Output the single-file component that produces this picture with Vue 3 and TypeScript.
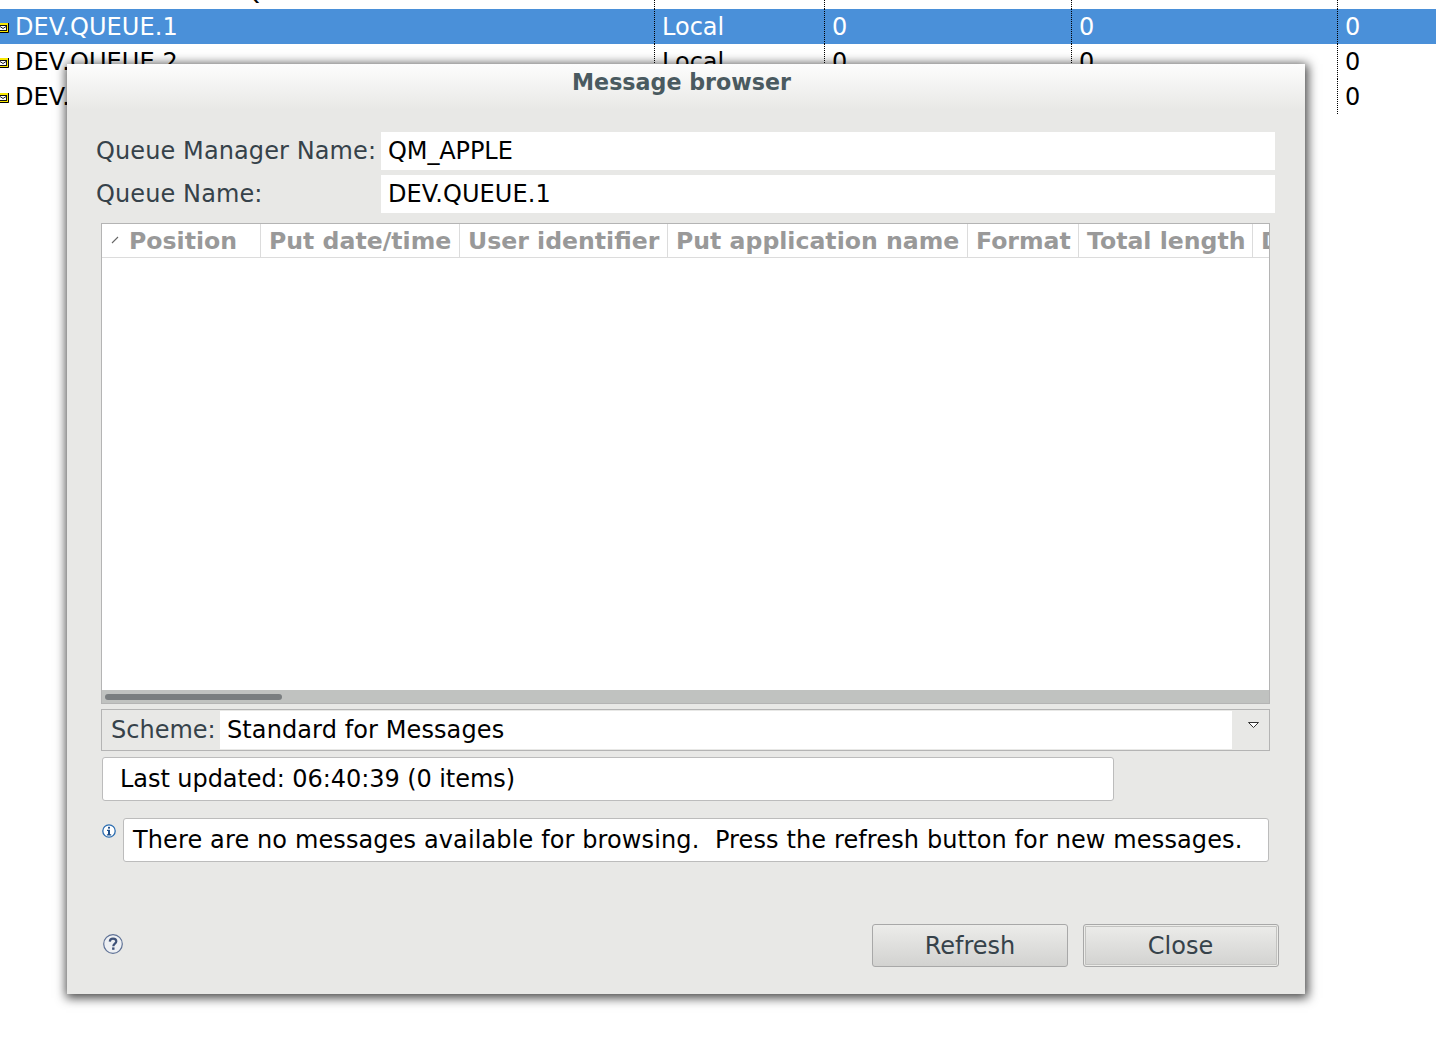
<script setup lang="ts">
const rows = [
  { name: 'DEV.DEAD.LETTER.QUEUE', selected: false },
  { name: 'DEV.QUEUE.1', selected: true },
  { name: 'DEV.QUEUE.2', selected: false },
  { name: 'DEV.QUEUE.3', selected: false },
]
const columns = [
  { label: 'Position', width: 159 },
  { label: 'Put date/time', width: 199 },
  { label: 'User identifier', width: 208 },
  { label: 'Put application name', width: 300 },
  { label: 'Format', width: 111 },
  { label: 'Total length', width: 174 },
  { label: 'Data length', width: 120 },
]
</script>

<template>
  <div class="page">
    <div class="queue-table">
      <div v-for="r in rows" :key="r.name" class="qrow" :class="{ selected: r.selected }">
        <div class="qcell qname">
          <svg class="mail" width="9" height="10" viewBox="0 0 9 10">
            <rect x="0" y="0" width="9" height="10" fill="#f7e600" />
            <path d="M8.5 0V9.5H0" fill="none" stroke="#000" stroke-width="1" />
            <rect x="-0.5" y="2.5" width="7" height="5" fill="#fff" stroke="#111" stroke-width="1" />
            <path d="M0 3.5l3 2 3-2" fill="none" stroke="#222" stroke-width="1" />
          </svg>
          <span class="qname-text">{{ r.name }}</span>
        </div>
        <div class="qcell qtype">Local</div>
        <div class="qcell qn1">0</div>
        <div class="qcell qn2">0</div>
        <div class="qcell qn3">0</div>
      </div>
    </div>

    <div class="dialog">
      <div class="title">Message browser</div>
      <div class="form">
        <div class="form-row">
          <label>Queue Manager Name:</label>
          <div class="value tight">QM_APPLE</div>
        </div>
        <div class="form-row">
          <label>Queue Name:</label>
          <div class="value wide">DEV.QUEUE.1</div>
        </div>
      </div>

      <div class="msg-table">
        <div class="msg-head">
          <div v-for="(c, i) in columns" :key="c.label" class="msg-col" :style="{ width: c.width + 'px' }">
            <svg v-if="i === 0" class="sort" width="8" height="8" viewBox="0 0 8 8">
              <path d="M1 7L7 1" stroke="#666" stroke-width="1.1" />
            </svg>
            <span>{{ c.label }}</span>
          </div>
        </div>
        <div class="msg-body"></div>
        <div class="hscroll"><div class="thumb"></div></div>
      </div>

      <div class="scheme">
        <span class="scheme-label">Scheme:</span>
        <div class="scheme-value">Standard for Messages</div>
        <div class="scheme-arrow">
          <svg width="11" height="6" viewBox="0 0 11 6">
            <path d="M0.5 0.5H10.5L5.5 5.5Z" fill="#fff" stroke="#333" stroke-width="1" />
          </svg>
        </div>
      </div>

      <div class="status">Last updated: 06:40:39 (0 items)</div>

      <div class="info-row">
        <svg class="info" width="14" height="14" viewBox="0 0 14 14">
          <circle cx="7" cy="7" r="6.2" fill="#fff" stroke="#2a6cb0" stroke-width="1.3" />
          <rect x="6" y="2.8" width="2" height="1.8" fill="#1f4f8a" />
          <path d="M5 5.8h3v4.4h1.2v1.2H4.9v-1.2H6V7H5z" fill="#1f4f8a" />
        </svg>
        <div class="info-box">There are no messages available for browsing.&nbsp; Press the refresh button for new messages.</div>
      </div>

      <div class="footer">
        <svg class="help" width="20" height="20" viewBox="0 0 20 20">
          <circle cx="10" cy="10" r="9.3" fill="#eef0f3" stroke="#5f7296" stroke-width="1.2" />
          <path d="M6.8 7.6C6.9 5.4 8.4 4.6 10 4.6c1.9 0 3.3 1 3.3 2.7 0 2.4-3 2.4-3 5" fill="none" stroke="#3f5278" stroke-width="2.2" />
          <rect x="9.1" y="13.4" width="2.4" height="2.4" fill="#3f5278" />
        </svg>
        <div class="buttons">
          <button class="btn">Refresh</button>
          <button class="btn default">Close</button>
        </div>
      </div>
    </div>
  </div>
</template>

<style>
html, body { margin: 0; background: #fff; overflow: hidden; }
</style>

<style scoped>
.page {
  position: relative;
  width: 1436px;
  height: 1048px;
  overflow: hidden;
  background: #fff;
  font-family: "DejaVu Sans", sans-serif;
  font-size: 24px;
}
.queue-table { margin-top: -26px; }
.qrow { display: flex; height: 35px; line-height: 37px; color: #000; }
.qrow.selected { background: #4a90d9; color: #fff; }
.qcell { box-sizing: border-box; padding-left: 7px; border-right: 1px dotted #000; height: 35px; white-space: nowrap; }
.qname { width: 655px; padding-left: 0; display: flex; align-items: center; }
.qname-text { letter-spacing: 0.09px; margin-top: 2px; }
.qtype { width: 170px; }
.qn1 { width: 247px; }
.qn2 { width: 266px; }
.qn3 { flex: 1; border-right: none; }
.mail { margin-right: 6px; margin-top: 2px; flex: none; }

.dialog {
  position: absolute;
  left: 67px;
  top: 64px;
  width: 1238px;
  height: 930px;
  box-sizing: border-box;
  display: flex;
  flex-direction: column;
  background: #e8e8e6;
  box-shadow: 1px 2px 10px 2px rgba(0, 0, 0, 0.72);
  color: #36424a;
}
.title {
  height: 68px;
  box-sizing: border-box;
  padding: 3px 9px 0 0;
  line-height: 30px;
  text-align: center;
  font-weight: 700;
  font-size: 22.2px;
  color: #4a5a60;
  background: linear-gradient(#fdfdfd, #e8e8e6 46px);
  flex: none;
}
.form { display: flex; flex-direction: column; gap: 5px; padding: 0 30px 0 29px; }
.form-row { display: flex; height: 38px; align-items: stretch; }
.form-row label { width: 285px; line-height: 39px; white-space: nowrap; letter-spacing: 0.1px; }
.value { flex: 1; background: #fff; color: #000; padding-left: 7px; line-height: 39px; }
.value.tight { letter-spacing: -0.1px; }
.value.wide { letter-spacing: 0.09px; }

.msg-table {
  margin: 10px 35px 0 34px;
  height: 481px;
  box-sizing: border-box;
  border: 1px solid #b4b4b4;
  background: #fff;
  display: flex;
  flex-direction: column;
  overflow: hidden;
}
.msg-head {
  display: flex;
  height: 34px;
  flex: none;
  box-sizing: border-box;
  border-bottom: 1px solid #dcdcdc;
}
.msg-col {
  box-sizing: border-box;
  flex: none;
  border-right: 1px solid #dcdcdc;
  color: #999;
  font-weight: 700;
  font-size: 23.6px;
  line-height: 34px;
  padding-left: 8px;
  white-space: nowrap;
  overflow: hidden;
}
.msg-col:first-child { padding-left: 27px; position: relative; }
.sort { position: absolute; left: 9px; top: 12px; }
.msg-body { flex: 1; }
.hscroll { height: 13px; background: #c0c2c0; flex: none; padding: 4px 0 0 3px; box-sizing: border-box; }
.thumb { width: 177px; height: 6px; border-radius: 3px; background: #7a7e80; }

.scheme {
  margin: 5px 35px 0 34px;
  height: 42px;
  box-sizing: border-box;
  border: 1px solid #b4b4b4;
  display: flex;
  padding: 1px 0;
}
.scheme-label { width: 118px; padding-left: 9px; box-sizing: border-box; line-height: 38px; }
.scheme-value { flex: 1; background: #fff; color: #000; padding-left: 7px; line-height: 38px; letter-spacing: 0.1px; }
.scheme-arrow { width: 37px; display: flex; justify-content: center; padding: 11px 0 0 5px; box-sizing: border-box; }

.status {
  margin: 6px 0 0 35px;
  width: 1012px;
  height: 44px;
  box-sizing: border-box;
  border: 1px solid #bcbcbc;
  border-radius: 3px;
  background: #fff;
  color: #000;
  padding-left: 17px;
  line-height: 43px;
  letter-spacing: -0.06px;
}
.info-row { display: flex; margin: 17px 36px 0 35px; }
.info { margin-top: 6px; margin-right: 7px; flex: none; }
.info-box {
  flex: 1;
  height: 44px;
  box-sizing: border-box;
  border: 1px solid #bcbcbc;
  border-radius: 3px;
  background: #fff;
  color: #000;
  padding-left: 9px;
  line-height: 43px;
  white-space: nowrap;
  letter-spacing: 0.12px;
}
.footer {
  display: flex;
  justify-content: space-between;
  align-items: flex-start;
  margin: 62px 26px 0 36px;
}
.help { margin-top: 10px; }
.buttons { display: flex; gap: 15px; }
.btn {
  width: 196px;
  height: 43px;
  box-sizing: border-box;
  border: 1px solid #a8a8a8;
  border-radius: 3px;
  background: linear-gradient(#ececea, #d2d2d0);
  color: #36424a;
  font-family: inherit;
  font-size: 24px;
  padding: 0;
}
.btn.default { box-shadow: inset 0 0 0 1px #ecece9, inset 0 0 0 2px #c2c2c0; padding-right: 1px; }
</style>
